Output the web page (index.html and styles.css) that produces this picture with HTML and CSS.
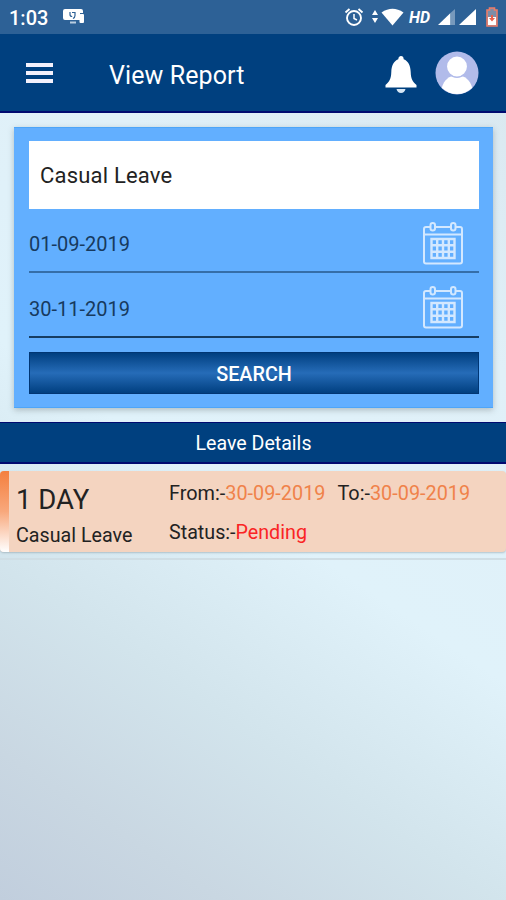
FILE: index.html
```
<!DOCTYPE html>
<html lang="en">
<head>
    <meta charset="UTF-8">
    <meta name="viewport" content="width=device-width, initial-scale=1.0">
    <title>View Report</title>
    <link rel="stylesheet" href="styles.css">
</head>
<body>
    <div class="status-bar">
        <span class="clock">1:03</span>
        <svg class="cast-icon" width="22" height="16" viewBox="0 0 22 16">
            <path fill="#fff" d="M2 0h16q2 0 2 2v2h-3v7H2q-2 0-2-2V2q0-2 2-2z"/>
            <rect x="7" y="12.500" width="6" height="2" fill="#b9cde0"/>
            <rect x="16.500" y="5" width="4.500" height="9" rx="1" fill="#fff"/>
            <path fill="none" stroke="#2d6196" stroke-width="1.200" d="M7 3v2.500q0 2 2.200 2M9 3.500h3v3q0 2-2 3"/>
        </svg>
        <div class="status-icons">
            <svg width="20" height="20" viewBox="0 0 20 20" fill="none" stroke="#fff" stroke-width="1.900">
                <circle cx="10" cy="11" r="7"/>
                <path d="M1.500 5.500l4-3.500M18.500 5.500l-4-3.500"/>
                <path stroke-width="1.500" d="M10 7v4.500l3 1.500"/>
            </svg>
            <svg class="wifi-icon" width="32" height="18" viewBox="0 0 32 18" fill="#fff">
                <path d="M0 7l3-5 3 5zM0 10h6l-3 5z"/>
                <path d="M9.500 4.500q11-7.500 22 0L20.500 17.500z"/>
            </svg>
            <span class="hd">HD</span>
            <svg class="signal-icon" width="17" height="16" viewBox="0 0 17 16">
                <path fill="#fff" d="M0 16L12.500 4v12z"/>
                <path fill="#7799bc" d="M12.500 4L17 0v16h-4.500z"/>
            </svg>
            <svg class="signal-icon" width="17" height="16" viewBox="0 0 17 16">
                <path fill="#fff" d="M0 16L17 0v16z"/>
            </svg>
            <svg class="battery-icon" width="12" height="20" viewBox="0 0 12 20">
                <path fill="#7d8da8" stroke="#ee7c68" stroke-width="1.600" d="M1 3h2.500V1h5v2H11v16H1z"/>
                <path fill="#fff" d="M2 10h8v8H2z"/>
                <path fill="#e9604c" d="M5 8h2v3h2l-3 3.500L3 11h2z"/>
            </svg>
        </div>
    </div>

    <div class="header">
        <div class="menu">
            <span></span>
            <span></span>
            <span></span>
        </div>
        <h1>View Report</h1>
        <svg class="bell" width="32" height="38" viewBox="0 0 32 38" fill="#fff">
            <path d="M16 0q2.500 0 2.700 3.200C23.500 5 25.500 10 25.700 16c.2 7 1.800 9.500 5.800 13v2.500H.5V29c4-3.500 5.600-6 5.800-13C6.500 10 8.500 5 13.300 3.200 13.500 0 16 0 16 0z"/>
            <path fill="#d6e6f5" d="M11.500 33h9q-1 4-4.500 4t-4.500-4z"/>
        </svg>
        <svg class="avatar" width="44" height="44" viewBox="0 0 44 44">
            <circle cx="22" cy="22" r="21.500" fill="#b1bbea"/>
            <path fill="#fff" d="M6.800 36.800C9 29 14 24.500 22 24.500S35 29 37.200 36.800A21.500 21.500 0 0 1 6.800 36.800z"/>
            <circle cx="22" cy="15.500" r="10.700" fill="#fff" stroke="#b1bbea" stroke-width="1.500"/>
        </svg>
    </div>

    <div class="search-panel">
        <div class="leave-type">Casual Leave</div>
        <div class="date-field">
            <span>01-09-2019</span>
            <svg class="calendar" width="40" height="43" viewBox="0 0 40 43" fill="none" stroke="#d3e8ff">
                <path stroke-width="2" d="M7 5H3Q1 5 1 7v32.500q0 2 2 2h34q2 0 2-2V7q0-2-2-2h-4M13 5h14M1 12.500h38"/>
                <rect x="7.500" y="1" width="4.500" height="7.500" rx="2.200" stroke-width="2"/>
                <rect x="28" y="1" width="4.500" height="7.500" rx="2.200" stroke-width="2"/>
                <path stroke-width="2.400" d="M8.500 17h23v19h-23zM14.200 17v19M20 17v19M25.800 17v19M8.500 23.300h23M8.500 29.700h23"/>
            </svg>
        </div>
        <div class="date-field date-to">
            <span>30-11-2019</span>
            <svg class="calendar" width="40" height="43" viewBox="0 0 40 43" fill="none" stroke="#d3e8ff">
                <path stroke-width="2" d="M7 5H3Q1 5 1 7v32.500q0 2 2 2h34q2 0 2-2V7q0-2-2-2h-4M13 5h14M1 12.500h38"/>
                <rect x="7.500" y="1" width="4.500" height="7.500" rx="2.200" stroke-width="2"/>
                <rect x="28" y="1" width="4.500" height="7.500" rx="2.200" stroke-width="2"/>
                <path stroke-width="2.400" d="M8.500 17h23v19h-23zM14.200 17v19M20 17v19M25.800 17v19M8.500 23.300h23M8.500 29.700h23"/>
            </svg>
        </div>
        <button class="search-button">SEARCH</button>
    </div>

    <div class="section-title">Leave Details</div>

    <div class="leave-item">
        <div class="leave-days">
            <div class="days">1 DAY</div>
            <div class="type">Casual Leave</div>
        </div>
        <div class="leave-info">
            <div class="dates">
                <div>From:-<span class="date">30-09-2019</span></div>
                <div>To:-<span class="date">30-09-2019</span></div>
            </div>
            <div>Status:-<span class="pending">Pending</span></div>
        </div>
    </div>
    <div class="divider"></div>
</body>
</html>
```
FILE: styles.css
```
* {
    box-sizing: border-box;
}

body {
    margin: 0;
    height: 900px;
    overflow: hidden;
    font-family: Roboto, sans-serif;
    color: #222;
    background: linear-gradient(34deg, #c1cedd 0%, #c9d7e2 12%, #d2e4ec 27%, #e0f2fa 45%, #e0f0f8 70%, #d8e6ee 100%);
}

/* status bar */
.status-bar {
    display: flex;
    align-items: center;
    height: 34px;
    padding: 0 8px 0 9px;
    background: #2d6196;
    color: #fff;
}

.clock {
    width: 54px;
    font-size: 20px;
    font-weight: 500;
    padding-top: 2px;
}

.status-icons {
    display: flex;
    align-items: center;
    margin-left: auto;
}

.wifi-icon {
    margin-left: 8px;
}

.hd {
    width: 22px;
    margin: 0 7px 0 5px;
    font-size: 16px;
    font-weight: 700;
    font-style: italic;
}

.signal-icon {
    margin-right: 4px;
}

.battery-icon {
    margin-left: 6px;
}

/* header */
.header {
    display: flex;
    align-items: center;
    height: 79px;
    padding: 0 27px 0 26px;
    background: #00407f;
    border-bottom: 2px solid #000a70;
    color: #fff;
}

.menu {
    display: flex;
    flex-direction: column;
    gap: 4px;
    width: 27px;
    padding-top: 1px;
}

.menu span {
    height: 4px;
    background: #f3f1fc;
}

.header h1 {
    flex: 1;
    margin: 0 0 0 56px;
    padding-top: 5px;
    font-size: 25px;
    font-weight: 400;
    letter-spacing: 0.1px;
}

.bell {
    margin-top: 4px;
}

.avatar {
    margin-left: 18px;
}

/* search form */
.search-panel {
    height: 281px;
    margin: 14px 13px 0 14px;
    padding: 13px 14px 0 15px;
    background: #62afff;
    border: 1px solid #4da5f8;
    border-width: 1px 0;
    box-shadow: 0 2px 6px rgba(80, 90, 90, 0.35);
}

.leave-type {
    height: 68px;
    padding-left: 11px;
    line-height: 69px;
    font-size: 22px;
    letter-spacing: 0.2px;
    background: #fff;
}

.date-field {
    display: flex;
    align-items: center;
    justify-content: space-between;
    height: 64px;
    padding: 6px 16px 0 0;
    font-size: 20px;
    color: #173a5e;
    border-bottom: 2px solid #356ea8;
}

.date-field span {
    padding-top: 2px;
}

.date-to {
    height: 65px;
    border-bottom-color: #163d62;
}

.search-button {
    display: block;
    width: 100%;
    height: 42px;
    margin-top: 14px;
    padding: 2px 0 0;
    border: 1px solid #003674;
    font-family: inherit;
    font-size: 19.8px;
    font-weight: 500;
    color: #fff;
    background: linear-gradient(#003f80, #266cb8 50%, #003f80);
}

/* leave list */
.section-title {
    height: 42px;
    margin-top: 14px;
    padding-left: 1px;
    line-height: 42px;
    font-size: 19.6px;
    text-align: center;
    color: #fff;
    background: #00407f;
    border: 2px solid #000a70;
    border-width: 1px 0 2px;
}

.leave-item {
    display: flex;
    position: relative;
    height: 81px;
    margin-top: 7px;
    padding-left: 16px;
    font-size: 19.7px;
    background: #f4d4c0;
    border-radius: 4px;
    box-shadow: 0 1px 2px rgba(90, 110, 120, 0.35);
}

.leave-item::before {
    content: "";
    position: absolute;
    top: 0;
    left: 0;
    width: 9px;
    height: 100%;
    border-radius: 4px 0 0 4px;
    background: linear-gradient(#f47f3e, #f8a87c 50%, #fff);
}

.leave-days {
    width: 153px;
}

.days {
    margin-top: 13px;
    line-height: 32px;
    font-size: 27.5px;
}

.type {
    margin-top: 8px;
    line-height: 24px;
}

.leave-info {
    padding-top: 11px;
    line-height: 24px;
}

.dates {
    display: flex;
    gap: 12px;
    margin-bottom: 15px;
    font-size: 19.85px;
}

.date {
    color: #f0824a;
}

.pending {
    color: #fa2424;
}

.divider {
    height: 2px;
    margin-top: 6px;
    background: #cfdee5;
}
```
